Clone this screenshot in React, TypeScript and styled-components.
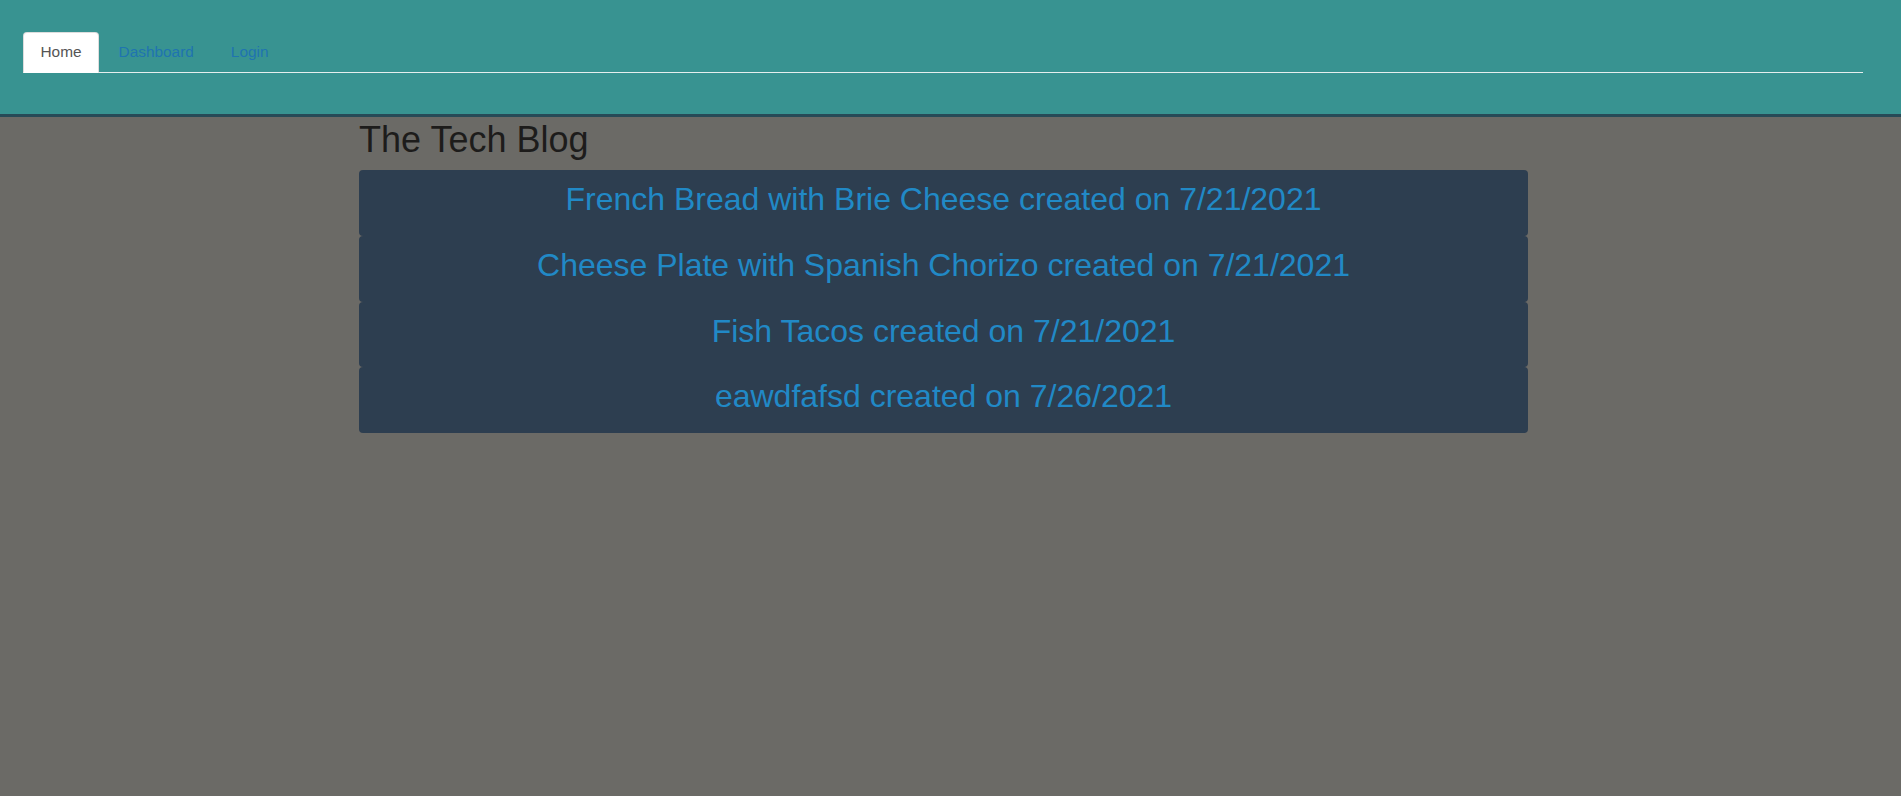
import React from 'react';
import styled, { createGlobalStyle } from 'styled-components';

const posts = [
    { title: 'French Bread with Brie Cheese', date: '7/21/2021' },
    { title: 'Cheese Plate with Spanish Chorizo', date: '7/21/2021' },
    { title: 'Fish Tacos', date: '7/21/2021' },
    { title: 'eawdfafsd', date: '7/26/2021' },
];

const App: React.FC = () => {
    return (
        <>
            <GlobalStyle />
            <Header>
                <NavTabs>
                    <Tab active>Home</Tab>
                    <Tab>Dashboard</Tab>
                    <Tab>Login</Tab>
                </NavTabs>
            </Header>
            <Main>
                <Title>The Tech Blog</Title>
                {posts.map((post, i) => (
                    <PostCard key={i}>
                        <PostTitle>{post.title} created on {post.date}</PostTitle>
                    </PostCard>
                ))}
            </Main>
        </>
    );
}

export default App;

const GlobalStyle = createGlobalStyle`
    body {
        margin: 0;
        background: #6b6a66;
        font-family: "Liberation Sans", Arial, Helvetica, sans-serif;
    }
`;

const Header = styled.header`
    background: #389391;
    height: 117px;
    border-bottom: 3px solid #274a57;
    padding: 32px 38px 0 23px;
    box-sizing: border-box;
`;

const NavTabs = styled.ul`
    display: flex;
    list-style: none;
    margin: 0;
    padding: 0;
    border-bottom: 1px solid #e6eeee;
`;

const Tab = styled.li<{ active?: boolean }>`
    font-size: 15.4px;
    line-height: 22px;
    padding: 8px 16.5px 9px;
    margin: 0 2px -1px 0;
    border: 1px solid ${props => props.active ? '#dddddd' : 'transparent'};
    border-bottom-color: transparent;
    border-radius: 4px 4px 0 0;
    background: ${props => props.active ? '#ffffff' : 'transparent'};
    color: ${props => props.active ? '#555555' : '#1f74b0'};
    cursor: pointer;
`;

const Main = styled.main`
    width: 1169px;
    margin-left: 359px;
`;

const Title = styled.h1`
    margin: 3px 0 10px;
    font-size: 36px;
    line-height: 40px;
    font-weight: 400;
    color: #1d1c1b;
`;

const PostCard = styled.div`
    background: #2d3e50;
    border-radius: 4px;
    height: 65.75px;
    padding-top: 11px;
    box-sizing: border-box;
    text-align: center;
`;

const PostTitle = styled.h2`
    margin: 0;
    font-size: 32px;
    line-height: 36px;
    font-weight: 400;
    color: #2189c6;
`;
